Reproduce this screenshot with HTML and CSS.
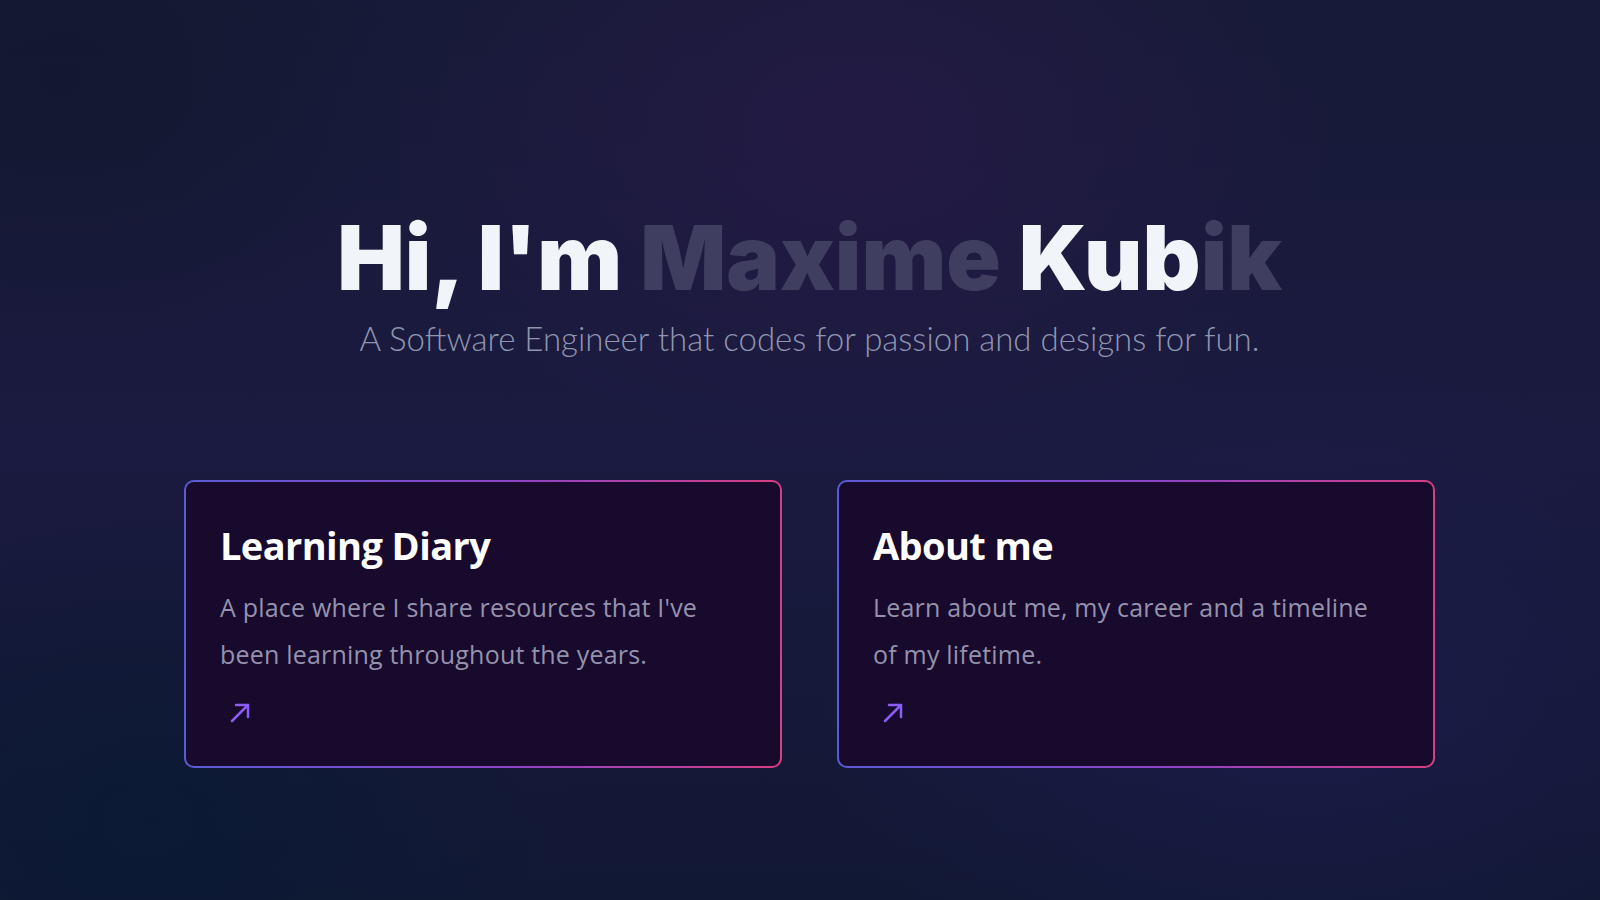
FILE: index.html
```html
<!DOCTYPE html>
<html lang="en">
<head>
<meta charset="utf-8">
<title>Maxime Kubik</title>
<link rel="stylesheet" href="styles.css">
</head>
<body>
<main class="page">
  <section class="hero">
    <h1 class="hero-title">Hi, I'm <span class="dim">Maxime</span> Kub<span class="dim">ik</span></h1>
    <p class="hero-sub">A Software Engineer that codes for passion and designs for fun.</p>
  </section>
  <section class="cards">
    <a class="card" href="#">
      <div class="card-inner">
        <h2 class="card-title">Learning Diary</h2>
        <p class="card-text">A place where I share resources that I've been learning throughout the years.</p>
        <svg class="card-arrow" viewBox="0 0 24 24" width="24" height="24" fill="none" stroke="currentColor" stroke-width="2.5" stroke-linecap="round" stroke-linejoin="round"><path d="M4 21 L20 5"/><path d="M8 5 H20 V17"/></svg>
      </div>
    </a>
    <a class="card" href="#">
      <div class="card-inner">
        <h2 class="card-title">About me</h2>
        <p class="card-text">Learn about me, my career and a timeline of my lifetime.</p>
        <svg class="card-arrow" viewBox="0 0 24 24" width="24" height="24" fill="none" stroke="currentColor" stroke-width="2.5" stroke-linecap="round" stroke-linejoin="round"><path d="M4 21 L20 5"/><path d="M8 5 H20 V17"/></svg>
      </div>
    </a>
  </section>
</main>
</body>
</html>
```

FILE: styles.css
```css
* { box-sizing: border-box; }
html, body { margin: 0; padding: 0; height: 100%; }
body {
  width: 1600px;
  height: 900px;
  overflow: hidden;
  font-family: "Open Sans", "Lato", sans-serif;
  background-color: #14182f;
  background-image:
    radial-gradient(ellipse 700px 500px at 860px 130px, rgba(40, 26, 72, 0.7), rgba(40, 26, 72, 0) 70%),
    radial-gradient(ellipse 700px 500px at 1300px 700px, rgba(28, 30, 80, 0.6), rgba(28, 30, 80, 0) 70%),
    radial-gradient(ellipse 600px 450px at 150px 820px, rgba(10, 26, 52, 0.85), rgba(10, 26, 52, 0) 70%),
    radial-gradient(ellipse 500px 400px at 60px 80px, rgba(16, 22, 42, 0.6), rgba(16, 22, 42, 0) 70%),
    linear-gradient(180deg, #171a38 0%, #1b1a40 50%, #111834 100%);
}
.page {
  padding-left: 19px;
  display: flex;
  flex-direction: column;
  align-items: center;
}
.hero {
  padding-top: 204px;
  text-align: center;
}
.hero-title {
  margin: 0;
  font-family: "Inter", sans-serif;
  font-weight: 900;
  font-size: 90px;
  line-height: 108px;
  letter-spacing: 0;
  color: #f1f5f9;
}
.dim { color: #403e60; }
.hero-sub {
  margin: 6px 0 0;
  font-family: "Lato", sans-serif;
  font-weight: 300;
  font-size: 33px;
  line-height: 40px;
  color: #8f96b0;
}
.cards {
  margin-top: 122px;
  display: flex;
  gap: 55px;
}
.card {
  display: block;
  width: 598px;
  height: 288px;
  padding: 2px;
  border-radius: 10px;
  background: linear-gradient(90deg, #5b5bd6 0%, #8f44c8 55%, #d63f83 100%);
  text-decoration: none;
}
.card-inner {
  height: 100%;
  border-radius: 8px;
  background: #170a2c;
  padding: 40px 46px 40px 34px;
  display: flex;
  flex-direction: column;
  align-items: flex-start;
}
.card-title {
  margin: 0;
  font-family: "Open Sans", sans-serif;
  font-weight: 700;
  font-size: 38px;
  line-height: 46px;
  letter-spacing: -0.6px;
  color: #ffffff;
}
.card-text {
  margin: 16px 0 0;
  font-size: 25px;
  line-height: 47px;
  letter-spacing: 0.2px;
  color: #9592ad;
}
.card-arrow {
  margin: 22px 0 0 8px;
  width: 24px;
  height: 24px;
  color: #8b5cf6;
}
```
